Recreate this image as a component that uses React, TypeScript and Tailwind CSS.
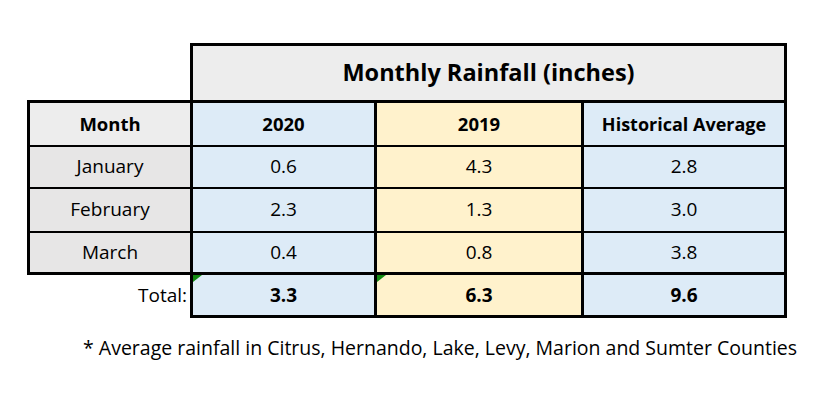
const rows = [
  { month: 'January', y2020: '0.6', y2019: '4.3', hist: '2.8' },
  { month: 'February', y2020: '2.3', y2019: '1.3', hist: '3.0' },
  { month: 'March', y2020: '0.4', y2019: '0.8', hist: '3.8' },
];

function ErrorMark() {
  // little green triangle Excel puts on cells with a formula warning
  return (
    <span className="absolute left-0 top-0 w-0 h-0 border-t-[7px] border-r-[9px] border-t-[#128a12] border-r-transparent" />
  );
}

export default function App() {
  const thin = 'border-y-2 border-black';
  return (
    <div
      className="w-[839px] h-[410px] bg-white text-black"
      style={{ fontFamily: '"Open Sans", "Noto Sans", sans-serif' }}
    >
      <div className="pl-[27px] pt-[43px]">
        <table className="border-collapse table-fixed text-[19px] leading-none">
          <colgroup>
            <col className="w-[163px]" />
            <col className="w-[184px]" />
            <col className="w-[207px]" />
            <col className="w-[203px]" />
          </colgroup>
          <tbody>
            <tr className="h-[57px]">
              <td />
              <th
                colSpan={3}
                className="border-[3px] border-black bg-[#ededed] text-[23.5px] font-bold"
              >
                Monthly Rainfall (inches)
              </th>
            </tr>
            <tr className="h-[44px] font-bold text-[18.5px]">
              <th className="border-[3px] border-b-2 border-black bg-[#ededed]">Month</th>
              <th className="border-x-[3px] border-t-[3px] border-b-2 border-black bg-[#ddebf7]">2020</th>
              <th className="border-x-[3px] border-t-[3px] border-b-2 border-black bg-[#fff2cc]">2019</th>
              <th className="border-x-[3px] border-t-[3px] border-b-2 border-black bg-[#ddebf7] text-[18px]">
                Historical Average
              </th>
            </tr>
            {rows.map((r, i) => {
              const last = i === rows.length - 1;
              const b = last ? 'border-t-2 border-b-[3px] border-black' : thin;
              return (
                <tr key={r.month} className={i === 1 ? 'h-[44px]' : 'h-[42px]'}>
                  <td className={`${b} border-x-[3px] bg-[#e7e6e6] text-center`}>{r.month}</td>
                  <td className={`${b} border-x-[3px] bg-[#ddebf7] text-center`}>{r.y2020}</td>
                  <td className={`${b} border-x-[3px] bg-[#fff2cc] text-center`}>{r.y2019}</td>
                  <td className={`${b} border-x-[3px] bg-[#ddebf7] text-center`}>{r.hist}</td>
                </tr>
              );
            })}
            <tr className="h-[43px]">
              <td className="text-right pr-[3px]">Total:</td>
              <td className="relative border-[3px] border-black bg-[#ddebf7] text-center font-bold">
                <ErrorMark />
                3.3
              </td>
              <td className="relative border-[3px] border-black bg-[#fff2cc] text-center font-bold">
                <ErrorMark />
                6.3
              </td>
              <td className="border-[3px] border-black bg-[#ddebf7] text-center font-bold">9.6</td>
            </tr>
          </tbody>
        </table>
      </div>
      <p className="pl-[83px] pt-[20px] text-[19.5px] leading-none">
        * Average rainfall in Citrus, Hernando, Lake, Levy, Marion and Sumter Counties
      </p>
    </div>
  );
}
